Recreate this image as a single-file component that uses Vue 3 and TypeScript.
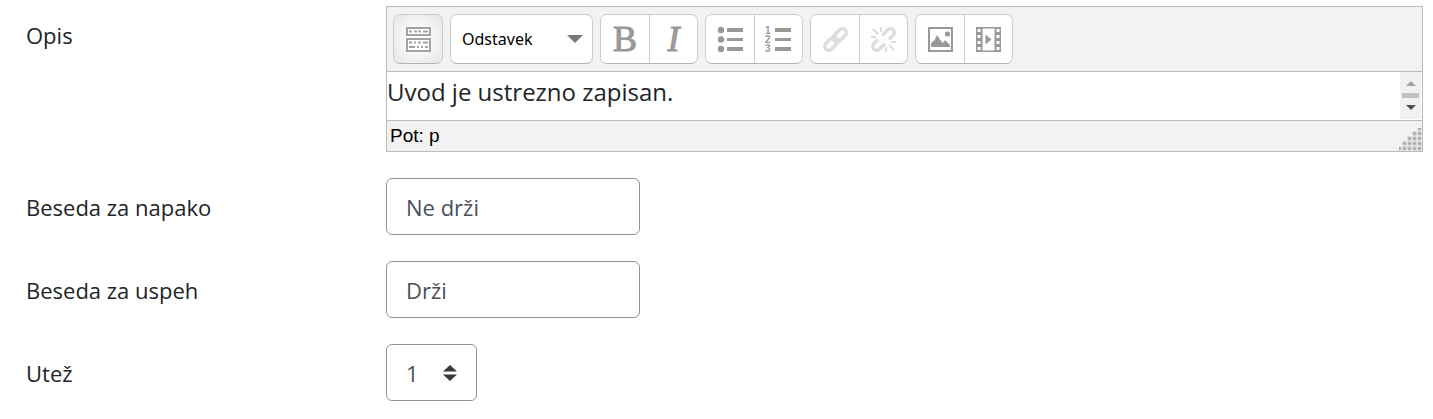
<script setup lang="ts">
import { ref } from 'vue'

const paragraphStyle = ref('Odstavek')
const failWord = ref('Ne drži')
const passWord = ref('Drži')
const weight = ref('1')
const weights = ['1', '2', '3', '4', '5']

const gripDots = [0, 1, 2, 3, 4].flatMap((row) =>
  Array.from({ length: row + 1 }, (_, i) => ({ x: 19 - i * 5, y: row * 5 - 1 })),
)
</script>

<template>
  <form class="form" @submit.prevent>
    <div class="row">
      <span id="desc-label" class="label">Opis</span>
      <div class="editor">
        <div class="toolbar" role="toolbar" aria-label="Orodna vrstica">
          <div class="group">
            <button type="button" class="tool active" aria-label="Preklop orodne vrstice">
              <svg viewBox="0 0 25 25" class="icon">
                <path d="M1 1h23v7H1zM1 12h23v12H1z" fill="#fff" stroke="#a3a3a3" stroke-width="2" />
                <path d="M3 4.500h3M8 4.500h3M12 4.500h3M17 4.500h5M3 15.500h3M8 15.500h2M12 15.500h3M17 15.500h5M3 20h6M11 20h2M15 20h2M19 20h3" stroke="#a3a3a3" stroke-width="2" />
              </svg>
            </button>
          </div>

          <div class="format">
            <select v-model="paragraphStyle" class="format-select" aria-label="Slog odstavka">
              <option>Odstavek</option>
              <option>Naslov</option>
            </select>
            <svg viewBox="0 0 16 8" class="format-arrow"><path d="M0 0h16L8 8z" fill="#7d7878" /></svg>
          </div>

          <div class="group">
            <button type="button" class="tool letter" aria-label="Krepko">B</button>
            <button type="button" class="tool letter italic" aria-label="Ležeče">I</button>
          </div>

          <div class="group">
            <button type="button" class="tool" aria-label="Označen seznam">
              <svg viewBox="0 0 25 25" class="icon" fill="#999">
                <circle cx="3" cy="3" r="3.2" /><circle cx="3" cy="12.5" r="3.2" /><circle cx="3" cy="22" r="3.2" />
                <path d="M9 1h16v4H9zM9 11h16v3H9zM9 20h16v4H9z" />
              </svg>
            </button>
            <button type="button" class="tool" aria-label="Oštevilčen seznam">
              <svg viewBox="0 0 25 25" class="icon" fill="#999">
                <text x="-1" y="7" class="digit">1</text>
                <text x="-1" y="16" class="digit">2</text>
                <text x="-1" y="25" class="digit">3</text>
                <path d="M9 1h16v4H9zM9 11h16v3H9zM9 20h16v4H9z" />
              </svg>
            </button>
          </div>

          <div class="group">
            <button type="button" class="tool" aria-label="Povezava" disabled>
              <svg viewBox="0 0 25 25" class="icon" fill="none" stroke="#ddd" stroke-width="3.4">
                <g transform="rotate(-45 12.5 12.5)">
                  <rect x="-1.200" y="8.600" width="15.500" height="7.800" rx="3.900" />
                  <rect x="10.700" y="8.600" width="15.500" height="7.800" rx="3.900" />
                </g>
              </svg>
            </button>
            <button type="button" class="tool" aria-label="Odstrani povezavo" disabled>
              <svg viewBox="0 0 25 25" class="icon" fill="none" stroke="#ddd" stroke-width="3.4">
                <g transform="rotate(-45 12.5 12.5)">
                  <path d="M10.500 16.400H2.700a3.900 3.900 0 0 1 0-7.800H8.500M14.500 8.600H22.300a3.900 3.900 0 0 1 0 7.800H16.500" />
                </g>
                <path d="M10 0v5M2 2l5 5M0 10h5M15 20v5M18 18l5 5M20 15h5" stroke-width="2" />
              </svg>
            </button>
          </div>

          <div class="group">
            <button type="button" class="tool" aria-label="Slika">
              <svg viewBox="0 0 25 25" class="icon">
                <path d="M1 1h23v23H1z" fill="#fff" stroke="#999" stroke-width="2" />
                <circle cx="19.500" cy="7" r="2.600" fill="#999" />
                <path d="M3 20v-3l2-3h1l3-6 4 6 2 2 2-3 5 5v2z" fill="#999" />
              </svg>
            </button>
            <button type="button" class="tool" aria-label="Večpredstavnost">
              <svg viewBox="0 0 25 25" class="icon">
                <path d="M0 0h25v25H0z" fill="#999" />
                <path d="M6.500 1.500h12v22h-12z" fill="#fff" />
                <path d="M1.500 2h3v3h-3zM1.500 8h3v3h-3zM1.500 14h3v3h-3zM1.500 20h3v3h-3zM20.500 2h3v3h-3zM20.500 8h3v3h-3zM20.500 14h3v3h-3zM20.500 20h3v3h-3z" fill="#fff" />
                <path d="M9.500 7.500l6 5-6 5z" fill="#999" />
              </svg>
            </button>
          </div>
        </div>

        <div class="body">
          <div class="content" contenteditable="true" role="textbox" aria-labelledby="desc-label">Uvod je ustrezno zapisan.</div>
          <div class="scrollbar">
            <svg viewBox="0 0 10 5" class="scroll-arrow"><path d="M0 5h10L5 0z" fill="#a3a3a3" /></svg>
            <span class="thumb"></span>
            <svg viewBox="0 0 10 5" class="scroll-arrow"><path d="M0 0h10L5 5z" fill="#505050" /></svg>
          </div>
        </div>

        <div class="status">
          <span class="path">Pot: p</span>
          <svg viewBox="0 0 23 23" class="grip">
            <rect v-for="(d, i) in gripDots" :key="i" :x="d.x" :y="d.y" width="3" height="3" fill="#a0a0a0" stroke="#c4c4c4" />
          </svg>
        </div>
      </div>
    </div>

    <div class="row">
      <label class="label" for="fail-word">Beseda za napako</label>
      <input id="fail-word" v-model="failWord" type="text" class="field" />
    </div>

    <div class="row">
      <label class="label" for="pass-word">Beseda za uspeh</label>
      <input id="pass-word" v-model="passWord" type="text" class="field" />
    </div>

    <div class="row">
      <label class="label" for="weight">Utež</label>
      <div class="weight">
        <select id="weight" v-model="weight" class="field weight-select">
          <option v-for="w in weights" :key="w">{{ w }}</option>
        </select>
        <svg viewBox="0 0 14 18" class="weight-arrows">
          <path d="M0 7.500h14L7 1zM0 10.500h14L7 17z" fill="#343a40" />
        </svg>
      </div>
    </div>
  </form>
</template>

<style>
body {
  background: #fff;
}
</style>

<style scoped>
* {
  box-sizing: border-box;
}
.form {
  display: flex;
  flex-direction: column;
  gap: 26px;
  padding: 6px 10px 18px 26px;
  font-family: 'Open Sans', 'Noto Sans', sans-serif;
  font-size: 22px;
  color: #212529;
}
.row {
  display: grid;
  grid-template-columns: 360px minmax(0, 1fr);
  align-items: start;
}
.label {
  padding-top: 14px;
  line-height: 30px;
}
.editor {
  border: 1px solid #bbb;
  background: #f2f2f2;
}
.toolbar {
  display: flex;
  flex-wrap: wrap;
  gap: 7px;
  padding: 7px 6px;
  border-bottom: 1px solid #bbb;
}
.group,
.format {
  border: 1px solid #ccc;
  border-bottom-color: #b3b3b3;
  border-radius: 7px;
  background: #fff;
  overflow: hidden;
}
.group {
  display: flex;
}
.tool {
  display: flex;
  align-items: center;
  justify-content: center;
  width: 48px;
  height: 48px;
  padding: 0;
  border: 0;
  background: #fff;
  color: #999;
}
.tool + .tool {
  border-left: 1px solid #ccc;
}
.tool.active {
  background: radial-gradient(#fff 20%, #e4e4e4 100%);
}
.icon {
  width: 25px;
  height: 25px;
  overflow: visible;
}
.letter {
  font-family: 'Liberation Serif', serif;
  font-size: 36px;
  line-height: 48px;
  -webkit-text-stroke: 1px #999;
}
.italic {
  font-style: italic;
}
.digit {
  font-family: 'Liberation Sans', sans-serif;
  font-size: 10px;
  font-weight: bold;
}
.format,
.weight {
  display: grid;
  align-items: center;
}
.format > *,
.weight > * {
  grid-area: 1 / 1;
}
.format {
  width: 143px;
}
.format-select {
  appearance: none;
  width: 100%;
  height: 48px;
  padding: 0 32px 0 11px;
  border: 0;
  background: transparent;
  color: #000;
  font-family: 'Noto Sans', sans-serif;
  font-size: 16px;
}
.format-arrow {
  justify-self: end;
  width: 16px;
  height: 8px;
  margin-right: 9px;
  pointer-events: none;
}
.body {
  display: flex;
  height: 49px;
  padding-right: 1px;
  background: #fff;
  border-bottom: 1px solid #bbb;
}
.content {
  flex: 1;
  font-size: 24px;
  line-height: 40px;
  outline: 0;
}
.scrollbar {
  display: flex;
  flex-direction: column;
  align-items: center;
  gap: 7px;
  width: 21px;
  height: 47px;
  padding-top: 9px;
  background: #f1f1f1;
}
.scroll-arrow {
  width: 10px;
  height: 5px;
}
.thumb {
  width: 17px;
  height: 5px;
  background: #c1c1c1;
}
.status {
  display: flex;
  justify-content: space-between;
  align-items: flex-end;
  height: 30px;
  padding-left: 3px;
  color: #000;
  font-family: 'Liberation Sans', Arial, sans-serif;
  font-size: 19px;
}
.path {
  line-height: 30px;
}
.grip {
  width: 23px;
  height: 23px;
}
.field {
  width: 254px;
  height: 57px;
  padding: 0 19px;
  border: 1px solid #8f959e;
  border-radius: 6px;
  background: #fff;
  color: #495057;
  font: inherit;
}
.weight {
  width: 91px;
}
.weight-select {
  appearance: none;
  width: 100%;
}
.weight-arrows {
  justify-self: end;
  width: 14px;
  height: 18px;
  margin-right: 20px;
  pointer-events: none;
}
</style>
